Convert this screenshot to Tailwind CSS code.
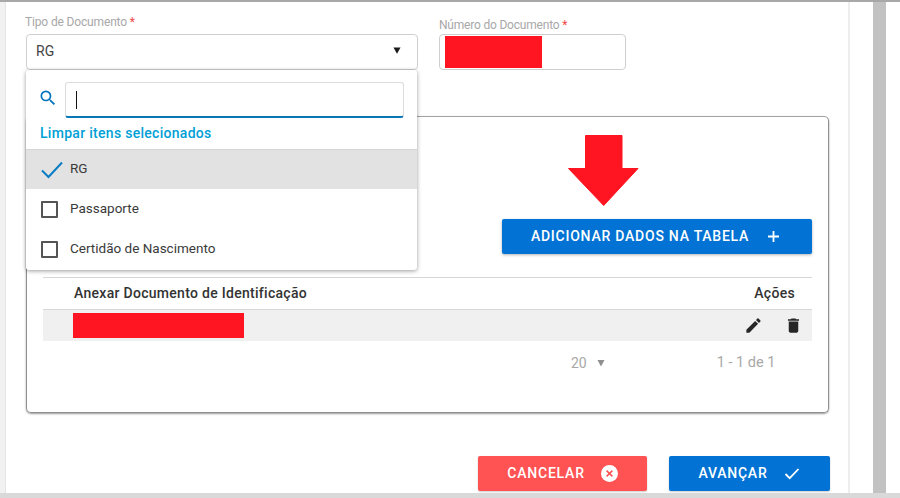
<!DOCTYPE html>
<html lang="pt">
<head>
<meta charset="utf-8">
<script src="https://cdn.jsdelivr.net/npm/@tailwindcss/browser@4"></script>
</head>
<body class="bg-white">
<div class="relative w-[900px] h-[498px] overflow-hidden bg-white flex flex-col font-['Roboto',sans-serif]">
  <div class="h-[2px] shrink-0 bg-[#a8a8a8]"></div>
  <div class="flex h-[491px] shrink-0">
    <div class="w-[6px] shrink-0 bg-[#f1f1f1] border-r border-[#e4e4e4]"></div>
    <main class="w-[844px] shrink-0 border-r-2 border-[#eeeeee] pl-[20px] pt-[13px]">
      <div class="flex h-[55px]">
        <div class="w-[392px] shrink-0">
          <div class="text-[12px] leading-[14px] h-[19px] -ml-px tracking-[-0.15px] text-[#a8a8a8]">Tipo de Documento <span class="text-[#f04a4a]">*</span></div>
          <div class="h-[36px] border border-[#cfcfcf] rounded-[4px] flex items-center justify-between pl-[9px] pr-[16px] text-[14px] text-[#444444]">
            <span class="-mt-[1px]">RG</span>
            <svg class="-mt-[3px]" width="8" height="7" viewBox="0 0 8 7"><path d="M0.5 0.5h7L4 6.8z" fill="#1a1a1a"/></svg>
          </div>
        </div>
        <div class="ml-[21px] w-[187px] shrink-0 pt-[3px]">
          <div class="text-[12px] leading-[14px] h-[17px] tracking-[-0.2px] text-[#a8a8a8] whitespace-nowrap">Número do Documento <span class="text-[#f04a4a]">*</span></div>
          <div class="h-[36px] border border-[#cfcfcf] rounded-[4px] pl-[5px] py-px -mt-[1px]">
            <div class="w-[97px] h-full bg-[#fe1521]"></div>
          </div>
        </div>
      </div>

      <section class="mt-[46px] w-[803px] h-[297px] border border-[#8f8f8f] border-t-[#a3a3a3] rounded-[5px] shadow-[0_1px_2px_rgba(0,0,0,0.4)] px-[16px] pt-[102px]">
        <div class="flex justify-end">
          <button class="w-[310px] h-[35px] rounded-[2px] bg-[#0273d4] text-white text-[14px] font-medium tracking-[0.76px] flex items-center justify-center gap-[18px] shadow-[0_1px_3px_rgba(0,0,0,0.3)] pr-[3px]">
            <span>ADICIONAR DADOS NA TABELA</span>
            <svg width="13" height="13" viewBox="0 0 13 13"><path d="M6.5 1v11M1 6.5h11" stroke="#fff" stroke-width="1.8" fill="none"/></svg>
          </button>
        </div>
        <div class="mt-[23px] border-t border-[#d6d6d6] h-[32px] flex items-center justify-between text-[14px] font-medium text-[#333333] tracking-[0.29px] pl-[31px] pr-[17px]">
          <span>Anexar Documento de Identificação</span>
          <span>Ações</span>
        </div>
        <div class="h-[32px] bg-[#f0f0f0] border-t border-[#d8d8d8] flex items-center justify-between pl-[30px] pr-[9px]">
          <div class="w-[171px] h-[25px] -mt-[1px] bg-[#fe1521]"></div>
          <div class="flex items-center gap-[21px]">
            <svg width="19" height="19" viewBox="0 0 24 24"><path d="M3 17.25V21h3.75L17.81 9.94l-3.75-3.75L3 17.25zM20.71 7.04a1 1 0 0 0 0-1.41l-2.34-2.34a1 1 0 0 0-1.41 0l-1.83 1.83 3.75 3.75 1.83-1.83z" fill="#262626"/></svg>
            <svg width="19" height="19" viewBox="0 0 24 24"><path d="M6 19c0 1.1.9 2 2 2h8c1.1 0 2-.9 2-2V7H6v12zM19 4h-3.5l-1-1h-5l-1 1H5v2h14V4z" fill="#262626"/></svg>
          </div>
        </div>
        <div class="flex items-center text-[14px] text-[#a8a8a8] mt-[12px] h-[20px]">
          <span class="ml-[528px]">20</span>
          <svg class="ml-[10px]" width="8" height="8" viewBox="0 0 8 8"><path d="M0.5 1h7L4 7.5z" fill="#8f8f8f"/></svg>
          <span class="ml-[112px] text-[14.5px]">1 - 1 de 1</span>
        </div>
      </section>

      <div class="flex mt-[43px] w-[804px] justify-end gap-[22px]">
        <button class="w-[169px] h-[35px] rounded-[2px] bg-[#ff5252] text-white text-[14px] font-medium tracking-[0.8px] flex items-center justify-center gap-[16px] shadow-[0_1px_2px_rgba(0,0,0,0.2)]">
          <span>CANCELAR</span>
          <svg width="17" height="17" viewBox="0 0 17 17"><circle cx="8.5" cy="8.5" r="8.5" fill="#fff"/><path d="M5.6 5.6l5.8 5.8M11.4 5.6l-5.8 5.8" stroke="#ff5252" stroke-width="1.5"/></svg>
        </button>
        <button class="w-[161px] h-[35px] rounded-[2px] bg-[#0273d4] text-white text-[14px] font-medium tracking-[0.75px] flex items-center justify-center gap-[17px] shadow-[0_1px_2px_rgba(0,0,0,0.2)]">
          <span>AVANÇAR</span>
          <svg width="16" height="13" viewBox="0 0 16 13"><path d="M1.5 7l4.2 4.2L14.5 2" stroke="#fff" stroke-width="1.8" fill="none"/></svg>
        </button>
      </div>
    </main>
    <div class="ml-[23px] w-[13px] shrink-0 bg-[#c2c2c2]"></div>
  </div>
  <div class="h-[5px] shrink-0 bg-[#d9d9d9]"></div>

  <!-- dropdown overlay -->
  <div class="absolute left-[26px] top-[70px] w-[391px] h-[200px] bg-white rounded-[3px] shadow-[0_1px_4px_rgba(0,0,0,0.4)]">
    <div class="flex items-start pl-[12px] pt-[12px] pr-[13px] h-[43px]">
      <svg class="mt-[6px]" width="20" height="20" viewBox="0 0 24 24"><path d="M15.5 14h-.79l-.28-.27A6.47 6.47 0 0 0 16 9.5 6.5 6.5 0 1 0 9.5 16c1.61 0 3.09-.59 4.23-1.57l.27.28v.79l5 4.99L20.49 19l-4.99-5zm-6 0C7.01 14 5 11.99 5 9.5S7.01 5 9.5 5 14 7.01 14 9.5 11.99 14 9.5 14z" fill="#0273bd"/></svg>
      <div class="ml-[7px] flex-1 h-[36px] border border-[#dcdcdc] border-b-2 border-b-[#0a76b8] rounded-[3px] flex items-center pl-[10px]">
        <div class="w-px h-[18px] bg-[#111111]"></div>
      </div>
    </div>
    <div class="h-[36px] pl-[14px] pt-[11px] text-[14px] leading-[18px] font-medium tracking-[0.29px] text-[#00a0d6]">Limpar itens selecionados</div>
    <div class="h-[40px] bg-[#e2e2e2] border-t border-[#d6d6d6] flex items-center pl-[15px] text-[13.5px] text-[#3a3a3a]">
      <svg class="w-[22px]" width="22" height="18" viewBox="0 0 22 18"><path d="M1 9.5l6.5 6.5L21 1.5" stroke="#0a7cc4" stroke-width="2" fill="none"/></svg>
      <span class="ml-[7px] -mt-[2px]">RG</span>
    </div>
    <div class="h-[40px] flex items-center pl-[15px] text-[13.5px] text-[#3a3a3a]">
      <div class="w-[17px] h-[17px] border-2 border-[#555555] rounded-[1px]"></div>
      <span class="ml-[12px] -mt-[2px]">Passaporte</span>
    </div>
    <div class="h-[40px] flex items-center pl-[15px] text-[13.5px] text-[#3a3a3a]">
      <div class="w-[17px] h-[17px] border-2 border-[#555555] rounded-[1px]"></div>
      <span class="ml-[12px] -mt-[2px]">Certidão de Nascimento</span>
    </div>
  </div>

  <!-- red arrow annotation -->
  <svg class="absolute left-[567px] top-[134px]" width="74" height="73" viewBox="0 0 74 73"><path d="M18.5 1.5h36.5v33h16L36.7 71.5 1.5 34.5h17z" fill="#fe1521" stroke="#fe1521" stroke-linejoin="round"/></svg>
</div>
</body>
</html>
